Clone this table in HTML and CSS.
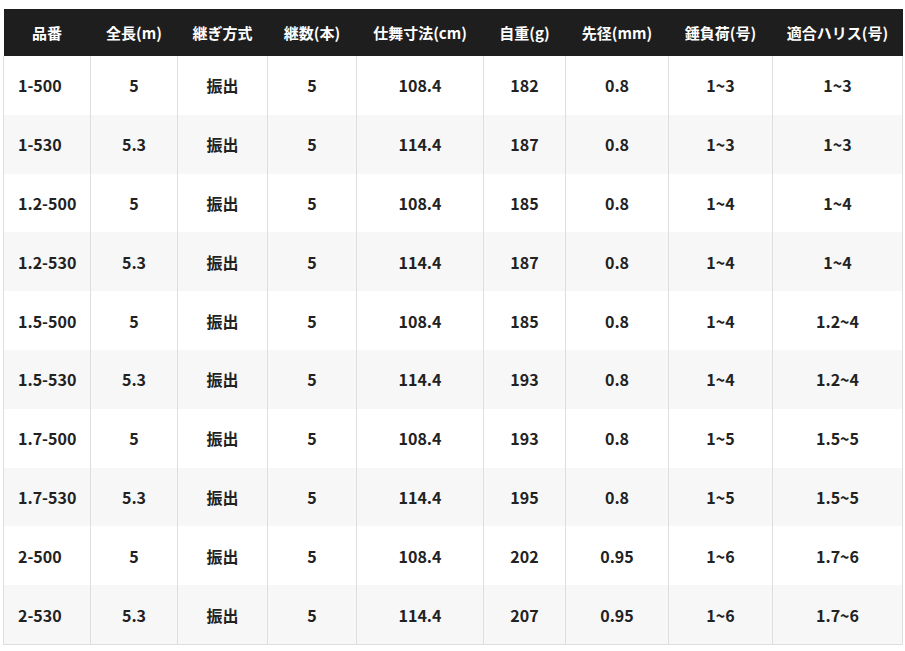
FILE: index.html
```html
<!DOCTYPE html>
<html lang="ja">
<head>
<meta charset="utf-8">
<link rel="stylesheet" href="styles.css">
</head>
<body>
<div class="wrap">
<table class="spec">
<colgroup>
<col style="width:87px"><col style="width:87px"><col style="width:90px"><col style="width:89px"><col style="width:127px"><col style="width:82px"><col style="width:103px"><col style="width:104px"><col style="width:130px">
</colgroup>
<thead>
<tr><th>品番</th><th>全長(m)</th><th>継ぎ方式</th><th>継数(本)</th><th>仕舞寸法(cm)</th><th>自重(g)</th><th>先径(mm)</th><th>錘負荷(号)</th><th>適合ハリス(号)</th></tr>
</thead>
<tbody>
<tr><td>1-500</td><td>5</td><td>振出</td><td>5</td><td>108.4</td><td>182</td><td>0.8</td><td>1~3</td><td>1~3</td></tr>
<tr><td>1-530</td><td>5.3</td><td>振出</td><td>5</td><td>114.4</td><td>187</td><td>0.8</td><td>1~3</td><td>1~3</td></tr>
<tr><td>1.2-500</td><td>5</td><td>振出</td><td>5</td><td>108.4</td><td>185</td><td>0.8</td><td>1~4</td><td>1~4</td></tr>
<tr><td>1.2-530</td><td>5.3</td><td>振出</td><td>5</td><td>114.4</td><td>187</td><td>0.8</td><td>1~4</td><td>1~4</td></tr>
<tr><td>1.5-500</td><td>5</td><td>振出</td><td>5</td><td>108.4</td><td>185</td><td>0.8</td><td>1~4</td><td>1.2~4</td></tr>
<tr><td>1.5-530</td><td>5.3</td><td>振出</td><td>5</td><td>114.4</td><td>193</td><td>0.8</td><td>1~4</td><td>1.2~4</td></tr>
<tr><td>1.7-500</td><td>5</td><td>振出</td><td>5</td><td>108.4</td><td>193</td><td>0.8</td><td>1~5</td><td>1.5~5</td></tr>
<tr><td>1.7-530</td><td>5.3</td><td>振出</td><td>5</td><td>114.4</td><td>195</td><td>0.8</td><td>1~5</td><td>1.5~5</td></tr>
<tr><td>2-500</td><td>5</td><td>振出</td><td>5</td><td>108.4</td><td>202</td><td>0.95</td><td>1~6</td><td>1.7~6</td></tr>
<tr><td>2-530</td><td>5.3</td><td>振出</td><td>5</td><td>114.4</td><td>207</td><td>0.95</td><td>1~6</td><td>1.7~6</td></tr>
</tbody>
</table>
</div>
</body>
</html>
```
FILE: styles.css
```css
html, body {
  margin: 0;
  padding: 0;
  background: #ffffff;
}
.wrap {
  padding: 9px 0 0 3px;
}
.spec {
  border-collapse: collapse;
  table-layout: fixed;
  width: 899px;
  font-family: "Noto Sans CJK JP", "Noto Sans", sans-serif;
  font-weight: 700;
  font-size: 16px;
  color: #222222;
}
.spec th {
  background: #1e1e1e;
  color: #ffffff;
  height: 47px;
  padding: 0;
  text-align: center;
  font-weight: 700;
  font-size: 15px;
  border: none;
}
.spec td {
  height: 58.8px;
  padding: 0;
  text-align: center;
  border-left: 1px solid #dedede;
  border-right: 1px solid #dedede;
}
.spec td:first-child {
  text-align: left;
  padding-left: 14px;
}
.spec tbody tr:nth-child(even) td {
  background: #f7f7f7;
}
.spec tbody tr:last-child td {
  border-bottom: 1px solid #dedede;
}
```
